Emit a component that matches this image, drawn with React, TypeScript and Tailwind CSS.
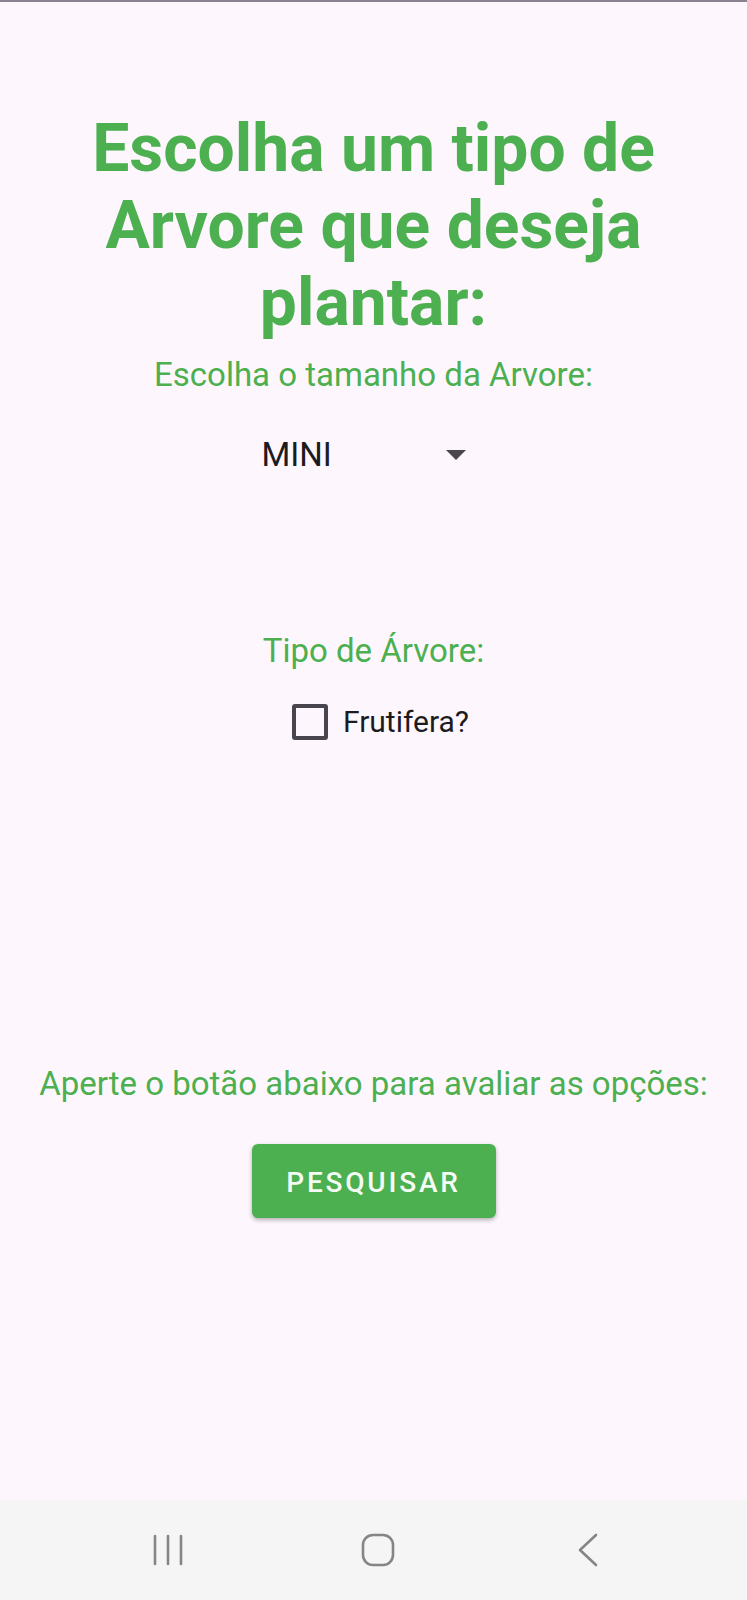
import { useState } from "react";

const SIZE_OPTIONS = ["MINI", "PEQUENA", "MEDIA", "GRANDE"];

function NavBar() {
  return (
    <div className="flex h-[100px] items-center justify-center gap-[110px] bg-[#f5f5f5] pl-[8px]">
      <div className="flex w-[100px] justify-center">
        <svg width="32" height="32" viewBox="0 0 32 32" className="text-[#858585]">
          <g stroke="currentColor" strokeWidth="2.6" strokeLinecap="round">
            <line x1="3" y1="2" x2="3" y2="30" />
            <line x1="16" y1="2" x2="16" y2="30" />
            <line x1="29" y1="2" x2="29" y2="30" />
          </g>
        </svg>
      </div>
      <div className="flex w-[100px] justify-center">
        <svg width="34" height="34" viewBox="0 0 34 34" className="text-[#858585]">
          <rect x="2" y="2" width="30" height="30" rx="10" fill="none" stroke="currentColor" strokeWidth="2.6" />
        </svg>
      </div>
      <div className="flex w-[100px] justify-center">
        <svg width="22" height="34" viewBox="0 0 22 34" className="text-[#858585]">
          <polyline points="19,2 3,17 19,32" fill="none" stroke="currentColor" strokeWidth="2.6" strokeLinecap="round" strokeLinejoin="round" />
        </svg>
      </div>
    </div>
  );
}

export default function App() {
  const [size] = useState(SIZE_OPTIONS[0]);
  const [fruit, setFruit] = useState(false);

  return (
    <div className="flex h-[1600px] w-[747px] flex-col bg-[#fdf7fd] font-['Roboto',sans-serif]">
      <div className="h-[2px] bg-[#8a8290]" />

      <main className="flex flex-1 flex-col items-center">
        <h1 className="mt-[108px] px-4 text-center text-[66px] font-bold leading-[77px] text-[#4caf50]">
          Escolha um tipo de Arvore que deseja plantar:
        </h1>

        <p className="mt-[14px] text-[33px] leading-[40px] text-[#4caf50]">
          Escolha o tamanho da Arvore:
        </p>

        <div className="mt-[40px] flex w-[236px] items-center justify-between pl-[6px] pr-[26px]">
          <span className="text-[33px] leading-[40px] text-[#1c1b1f]">{size}</span>
          <svg width="20" height="10" viewBox="0 0 20 10">
            <polygon points="0,0 20,0 10,10" fill="#49454f" />
          </svg>
        </div>

        <p className="mt-[156px] text-[33px] leading-[40px] text-[#4caf50]">
          Tipo de Árvore:
        </p>

        <label className="mt-[31px] ml-[14px] flex h-[40px] cursor-pointer items-center gap-[15px]">
          <button
            type="button"
            onClick={() => setFruit(!fruit)}
            className="h-[36px] w-[36px] rounded-[3px] border-[4px] border-[#49454f]"
          />
          <span className="text-[30px] leading-[40px] text-[#1c1b1f]">Frutifera?</span>
        </label>

        <p className="mt-[322px] text-[33px] leading-[40px] text-[#4caf50]">
          Aperte o botão abaixo para avaliar as opções:
        </p>

        <button
          type="button"
          className="mt-[40px] h-[74px] w-[244px] rounded-[6px] bg-[#4caf50] pt-[4px] text-[28px] font-medium tracking-[0.1em] text-[#f4fbf4] shadow-[0_2px_4px_rgba(0,0,0,0.3)]"
        >
          PESQUISAR
        </button>
      </main>

      <NavBar />
    </div>
  );
}
